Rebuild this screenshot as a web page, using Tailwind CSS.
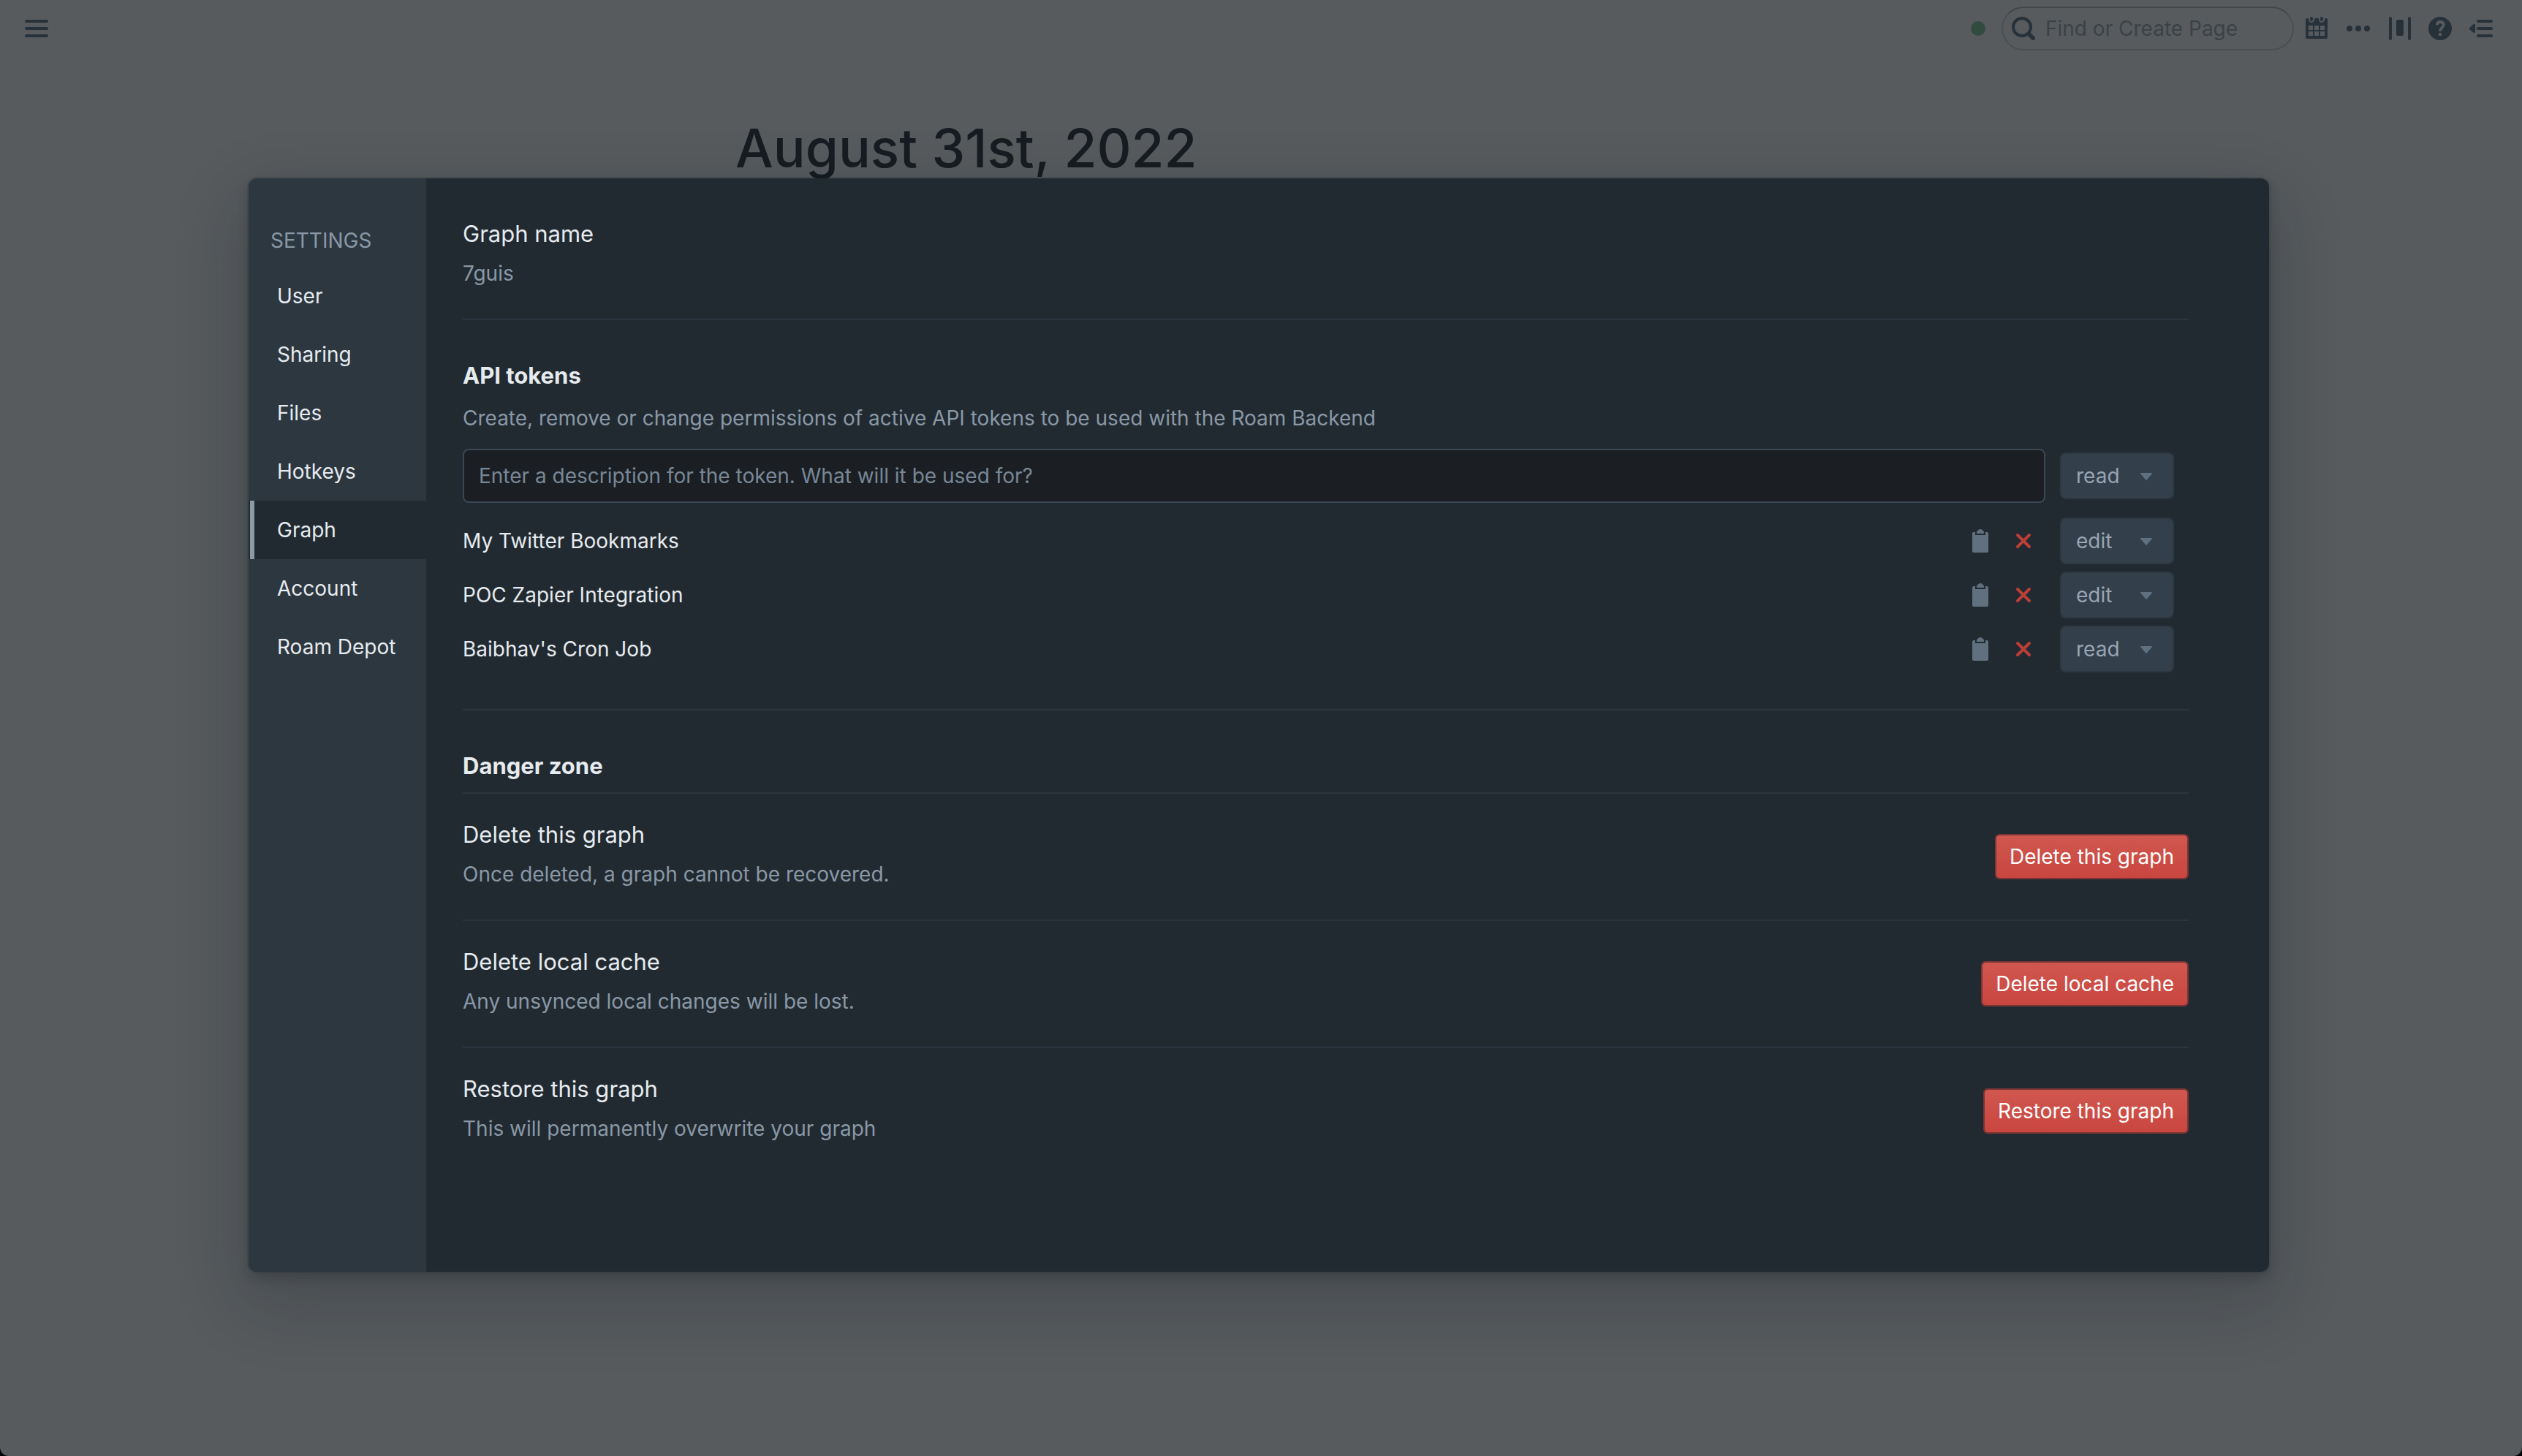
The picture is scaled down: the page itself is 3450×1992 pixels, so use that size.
<!DOCTYPE html>
<html lang="en" class="bg-black">
<head>
<meta charset="utf-8">
<meta name="viewport" content="width=device-width, initial-scale=1">
<title>Graph settings</title>
<script src="https://cdn.jsdelivr.net/npm/@tailwindcss/browser@4"></script>
</head>
<body class="font-['Inter',sans-serif] text-[28px] leading-9 text-[#e6ebef]">
<div class="relative min-h-screen overflow-hidden rounded-b-xl bg-[#575b5e]">

  <header class="flex h-[78px] items-center justify-between pl-[34px] pr-10 text-[#27313a]">
    <button type="button" aria-label="Open menu">
      <svg class="size-8" viewBox="0 0 16 16" fill="currentColor"><rect y="2" width="16" height="2" rx="1"/><rect y="7" width="16" height="2" rx="1"/><rect y="12" width="16" height="2" rx="1"/></svg>
    </button>
    <div class="flex items-center">
      <span class="mr-[22px] size-5 rounded-full bg-[#324b3f]"></span>
      <label class="mr-4 flex h-[60px] w-[400px] items-center gap-[14px] rounded-full border-2 border-[#4b4f53] border-t-[#43474a] pl-3 pr-6">
        <svg class="size-8 shrink-0" viewBox="0 0 16 16" fill="none" stroke="currentColor"><circle cx="7" cy="7" r="6" stroke-width="2"/><path d="M11.6 11.6l3 3" stroke-width="2.8" stroke-linecap="round"/></svg>
        <input type="search" aria-label="Find or Create Page" placeholder="Find or Create Page" class="w-full min-w-0 bg-transparent outline-none placeholder:text-[#3c4147]">
      </label>
      <nav class="flex items-center gap-6" aria-label="Page tools">
        <button type="button" aria-label="Daily notes"><svg class="size-8" viewBox="0 0 16 16" fill="currentColor"><path d="M11 3c.6 0 1-.5 1-1V1c0-.6-.4-1-1-1s-1 .4-1 1v1c0 .5.4 1 1 1zm3-2h-1v1c0 1.1-.9 2-2 2s-2-.9-2-2V1H6v1c0 1.1-.9 2-2 2s-2-.9-2-2V1H1c-.6 0-1 .5-1 1v12c0 .6.4 1 1 1h13c.6 0 1-.4 1-1V2c0-.6-.5-1-1-1zM5 13H2v-3h3v3zm0-4H2V6h3v3zm4 4H6v-3h3v3zm0-4H6V6h3v3zm4 4h-3v-3h3v3zm0-4h-3V6h3v3zM4 3c.6 0 1-.5 1-1V1c0-.6-.4-1-1-1S3 .4 3 1v1c0 .5.4 1 1 1z"/></svg></button>
        <button type="button" aria-label="More"><svg class="size-8" viewBox="0 0 16 16" fill="currentColor"><circle cx="2" cy="8" r="2"/><circle cx="8" cy="8" r="2"/><circle cx="14" cy="8" r="2"/></svg></button>
        <button type="button" aria-label="Page width"><svg class="size-8" viewBox="0 0 16 16" fill="currentColor"><rect x="1" width="2" height="16" rx="1"/><rect x="14" width="2" height="16" rx="1"/><rect x="6" y="2" width="5" height="11" rx="1"/></svg></button>
        <button type="button" aria-label="Help"><svg class="size-8" viewBox="0 0 16 16"><circle cx="8" cy="8" r="8" fill="currentColor"/><path d="M5.9 5.6C6 4.2 6.8 3.5 8.1 3.5c1.400 0 2.200.8 2.200 1.900C10.300 7.400 8 7.500 8 9.900" fill="none" stroke="#575b5e" stroke-width="1.900"/><rect x="7" y="11" width="2" height="2" fill="#575b5e"/></svg></button>
        <button type="button" aria-label="Open right sidebar"><svg class="size-8" viewBox="0 0 16 16" fill="currentColor"><path d="M.3 7.300L2.600 5.200C3.100 4.800 4 5 4 5.700v4.600c0 .7-.9.9-1.400.5L.3 8.700a1 1 0 0 1 0-1.400z"/><rect x="5" y="2" width="11" height="2" rx="1"/><rect x="5" y="7" width="11" height="2" rx="1"/><rect x="5" y="12" width="11" height="2" rx="1"/></svg></button>
      </nav>
    </div>
  </header>

  <h1 class="pl-[1006px] pt-20 text-[73px] font-medium leading-[90px] text-[#161c21]">August 31st, 2022</h1>

  <div class="absolute inset-0 pl-[340px] pr-[346px] pt-[244px]">
    <div role="dialog" aria-label="Settings" class="flex overflow-hidden rounded-xl bg-[#222a31] shadow-[0_0_0_2px_rgba(16,22,26,0.1),0_8px_16px_rgba(16,22,26,0.2),0_36px_92px_12px_rgba(16,22,26,0.2)]">

      <aside class="w-[243px] shrink-0 bg-[#2d3740] pt-[67px]">
        <h2 class="mb-[18px] pl-[30px] text-[#8998a6]">SETTINGS</h2>
        <nav aria-label="Settings sections">
          <a href="#user" class="flex h-20 items-center pl-[39px]">User</a>
          <a href="#sharing" class="flex h-20 items-center pl-[39px]">Sharing</a>
          <a href="#files" class="flex h-20 items-center pl-[39px]">Files</a>
          <a href="#hotkeys" class="flex h-20 items-center pl-[39px]">Hotkeys</a>
          <a href="#graph" aria-current="page" class="flex h-20 items-center bg-[#222a31] pl-[2px]"><span class="mr-[31px] w-[6px] self-stretch bg-[#8a9ba8]"></span>Graph</a>
          <a href="#account" class="flex h-20 items-center pl-[39px]">Account</a>
          <a href="#depot" class="flex h-20 items-center pl-[39px]">Roam Depot</a>
        </nav>
      </aside>

      <main class="min-w-0 flex-1 pb-[134px] pl-[50px] pr-[110px] pt-5">
        <section class="border-b-2 border-[#2b353f] pb-11 pt-9">
          <h3 class="mb-4 text-[31px] leading-10">Graph name</h3>
          <p class="text-[#8998a6]">7guis</p>
        </section>

        <section class="border-b-2 border-[#2b353f] pb-[50px] pt-14">
          <h3 class="mb-5 text-[31px] font-bold leading-10">API tokens</h3>
          <p class="mb-6 text-[#8998a6]">Create, remove or change permissions of active API tokens to be used with the Roam Backend</p>
          <div class="mb-5 flex items-center gap-5 pr-5">
            <input type="text" aria-label="Token description" placeholder="Enter a description for the token. What will it be used for?" class="h-[74px] min-w-0 flex-1 rounded-lg border-2 border-[#3b4755] bg-[#1b1f23] px-5 outline-none placeholder:text-[#788797]">
            <div class="relative">
              <select aria-label="New token permission" class="h-16 w-[156px] appearance-none rounded-lg border-2 border-[#2d3842] bg-[#333f4b] px-5 text-[#98a5b2]"><option>read</option><option>edit</option></select>
              <svg class="pointer-events-none absolute right-[30px] top-7 h-[10px] w-4" viewBox="0 0 16 10" fill="#5f7080"><path d="M1 0h14c1 0 1.200.8.600 1.500L8.700 9.500a1 1 0 0 1-1.400 0L.4 1.500C-.2.8 0 0 1 0z"/></svg>
            </div>
          </div>
          <ul class="flex flex-col gap-[10px] pr-5">
            <li class="flex h-16 items-center">
              <span class="flex-1">My Twitter Bookmarks</span>
              <button type="button" aria-label="Copy token" class="mr-7"><svg class="size-8" viewBox="0 0 16 16" fill="#60707f"><path d="M11 2c0-.55-.45-1-1-1h.22C9.880.4 9.240 0 8.500 0S7.120.4 6.780 1H7c-.55 0-1 .45-1 1v1h5V2zm2 0h-1v2H5V2H4c-.55 0-1 .45-1 1v12c0 .55.45 1 1 1h9c.55 0 1-.45 1-1V3c0-.55-.45-1-1-1z"/></svg></button>
              <button type="button" aria-label="Remove token" class="mr-[34px]"><svg class="size-8" viewBox="0 0 16 16" fill="none" stroke="#bb3e37" stroke-width="2" stroke-linecap="round"><path d="M4 4l8 8M12 4l-8 8"/></svg></button>
              <div class="relative">
                <select aria-label="My Twitter Bookmarks permission" class="h-16 w-[156px] appearance-none rounded-lg border-2 border-[#2d3842] bg-[#333f4b] px-5 text-[#98a5b2]"><option>edit</option><option>read</option></select>
                <svg class="pointer-events-none absolute right-[30px] top-7 h-[10px] w-4" viewBox="0 0 16 10" fill="#5f7080"><path d="M1 0h14c1 0 1.200.8.600 1.500L8.700 9.500a1 1 0 0 1-1.400 0L.4 1.500C-.2.8 0 0 1 0z"/></svg>
              </div>
            </li>
            <li class="flex h-16 items-center">
              <span class="flex-1">POC Zapier Integration</span>
              <button type="button" aria-label="Copy token" class="mr-7"><svg class="size-8" viewBox="0 0 16 16" fill="#60707f"><path d="M11 2c0-.55-.45-1-1-1h.22C9.880.4 9.240 0 8.500 0S7.120.4 6.780 1H7c-.55 0-1 .45-1 1v1h5V2zm2 0h-1v2H5V2H4c-.55 0-1 .45-1 1v12c0 .55.45 1 1 1h9c.55 0 1-.45 1-1V3c0-.55-.45-1-1-1z"/></svg></button>
              <button type="button" aria-label="Remove token" class="mr-[34px]"><svg class="size-8" viewBox="0 0 16 16" fill="none" stroke="#bb3e37" stroke-width="2" stroke-linecap="round"><path d="M4 4l8 8M12 4l-8 8"/></svg></button>
              <div class="relative">
                <select aria-label="POC Zapier Integration permission" class="h-16 w-[156px] appearance-none rounded-lg border-2 border-[#2d3842] bg-[#333f4b] px-5 text-[#98a5b2]"><option>edit</option><option>read</option></select>
                <svg class="pointer-events-none absolute right-[30px] top-7 h-[10px] w-4" viewBox="0 0 16 10" fill="#5f7080"><path d="M1 0h14c1 0 1.200.8.600 1.500L8.700 9.500a1 1 0 0 1-1.400 0L.4 1.500C-.2.8 0 0 1 0z"/></svg>
              </div>
            </li>
            <li class="flex h-16 items-center">
              <span class="flex-1">Baibhav's Cron Job</span>
              <button type="button" aria-label="Copy token" class="mr-7"><svg class="size-8" viewBox="0 0 16 16" fill="#60707f"><path d="M11 2c0-.55-.45-1-1-1h.22C9.880.4 9.240 0 8.500 0S7.120.4 6.780 1H7c-.55 0-1 .45-1 1v1h5V2zm2 0h-1v2H5V2H4c-.55 0-1 .45-1 1v12c0 .55.45 1 1 1h9c.55 0 1-.45 1-1V3c0-.55-.45-1-1-1z"/></svg></button>
              <button type="button" aria-label="Remove token" class="mr-[34px]"><svg class="size-8" viewBox="0 0 16 16" fill="none" stroke="#bb3e37" stroke-width="2" stroke-linecap="round"><path d="M4 4l8 8M12 4l-8 8"/></svg></button>
              <div class="relative">
                <select aria-label="Baibhav's Cron Job permission" class="h-16 w-[156px] appearance-none rounded-lg border-2 border-[#2d3842] bg-[#333f4b] px-5 text-[#98a5b2]"><option>read</option><option>edit</option></select>
                <svg class="pointer-events-none absolute right-[30px] top-7 h-[10px] w-4" viewBox="0 0 16 10" fill="#5f7080"><path d="M1 0h14c1 0 1.200.8.600 1.500L8.700 9.500a1 1 0 0 1-1.400 0L.4 1.500C-.2.8 0 0 1 0z"/></svg>
              </div>
            </li>
          </ul>
        </section>

        <h3 class="border-b-2 border-[#2b353f] pb-4 pt-14 text-[31px] font-bold leading-10">Danger zone</h3>

        <section class="flex items-center justify-between border-b-2 border-[#2b353f]">
          <div class="pb-11 pt-9">
            <h4 class="mb-4 text-[31px] leading-10">Delete this graph</h4>
            <p class="text-[#8998a6]">Once deleted, a graph cannot be recovered.</p>
          </div>
          <button type="button" class="h-[62px] rounded-md border-2 border-[#7a3534] bg-linear-to-b from-[#d0574f] to-[#c9463f] bg-clip-padding px-[18px] text-white">Delete this graph</button>
        </section>
        <section class="flex items-center justify-between border-b-2 border-[#2b353f]">
          <div class="pb-11 pt-9">
            <h4 class="mb-4 text-[31px] leading-10">Delete local cache</h4>
            <p class="text-[#8998a6]">Any unsynced local changes will be lost.</p>
          </div>
          <button type="button" class="h-[62px] rounded-md border-2 border-[#7a3534] bg-linear-to-b from-[#d0574f] to-[#c9463f] bg-clip-padding px-[18px] text-white">Delete local cache</button>
        </section>
        <section class="flex items-center justify-between">
          <div class="pb-11 pt-9">
            <h4 class="mb-4 text-[31px] leading-10">Restore this graph</h4>
            <p class="text-[#8998a6]">This will permanently overwrite your graph</p>
          </div>
          <button type="button" class="h-[62px] rounded-md border-2 border-[#7a3534] bg-linear-to-b from-[#d0574f] to-[#c9463f] bg-clip-padding px-[18px] text-white">Restore this graph</button>
        </section>
      </main>
    </div>
  </div>
</div>
</body>
</html>
